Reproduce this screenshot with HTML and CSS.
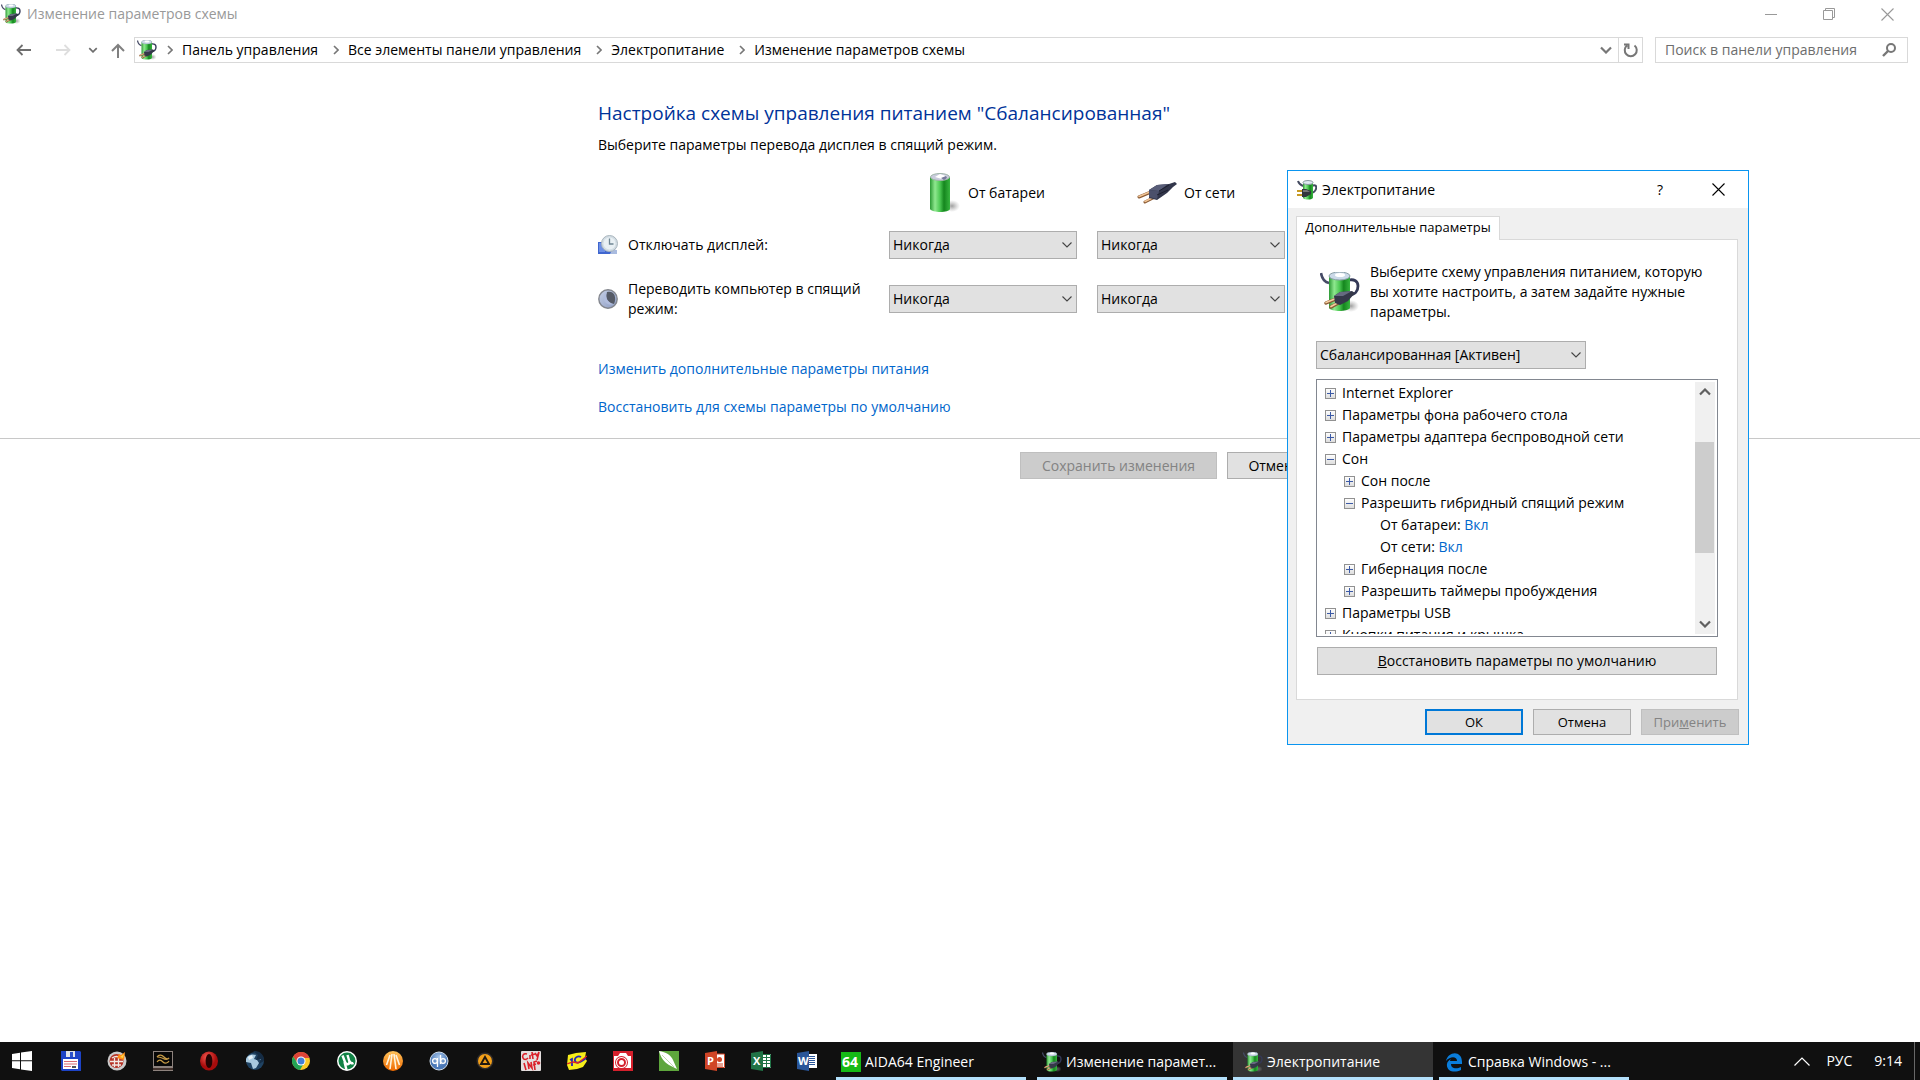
FILE: index.html
```html
<!DOCTYPE html>
<html lang="ru">
<head>
<meta charset="utf-8">
<title>Изменение параметров схемы</title>
<link rel="stylesheet" href="styles.css">
</head>
<body>
<svg class="defs" aria-hidden="true">
  <defs>
    <linearGradient id="green" x1="0" x2="1" y1="0" y2="0">
      <stop offset="0" stop-color="#2c9a35"/><stop offset=".25" stop-color="#8fe88f"/><stop offset=".5" stop-color="#4cc853"/><stop offset=".7" stop-color="#15861e"/><stop offset="1" stop-color="#37b53f"/>
    </linearGradient>
    <linearGradient id="box" x1="0" x2="0" y1="0" y2="1"><stop offset="0" stop-color="#fff"/><stop offset="1" stop-color="#dcdcdc"/></linearGradient>
    <radialGradient id="shade"><stop offset="0" stop-color="#777" stop-opacity=".7"/><stop offset="1" stop-color="#999" stop-opacity="0"/></radialGradient>
    <radialGradient id="red" cx=".4" cy=".3"><stop offset="0" stop-color="#f4574e"/><stop offset="1" stop-color="#a80c0c"/></radialGradient>
    <radialGradient id="blue" cx=".5" cy=".3"><stop offset="0" stop-color="#a9c7ea"/><stop offset="1" stop-color="#4b79b8"/></radialGradient>
    <linearGradient id="orange" x1="0" x2="0" y1="0" y2="1"><stop offset="0" stop-color="#ffc35a"/><stop offset="1" stop-color="#f06a00"/></linearGradient>
    <linearGradient id="moon" x1="0" x2="1" y1="0" y2="1"><stop offset="0" stop-color="#c6d0e6"/><stop offset="1" stop-color="#8c9bc2"/></linearGradient>
    <symbol id="plug" viewBox="0 0 40 22">
      <path d="M2 15L14 10M8 20L18 15" stroke="#8a5a33" stroke-width="3" stroke-linecap="round"/>
      <path d="M2 14.500L14 9.500M8 19.500L18 14.500" stroke="#f0c496" stroke-width="1.600" stroke-linecap="round"/>
      <path d="M12 8l8-5 12-1 6-2 2 2-4 3-6 6-10 7-8-2z" fill="#32364b"/>
      <path d="M12 8l8-5 11-1-9 7z" fill="#585d78"/><path d="M12 8l10 1-2 8-8-2z" fill="#4b506b"/>
      <path d="M22 9L32 3M20 13l11-5" stroke="#1d2030" stroke-width="1"/>
    </symbol>
    <symbol id="battery" viewBox="0 0 32 40">
      <ellipse cx="23" cy="33" rx="8" ry="6" fill="url(#shade)"/>
      <path d="M1 4v32c2 4 19 4 20 0V4z" fill="url(#green)"/>
      <ellipse cx="11" cy="4" rx="9.500" ry="3.500" fill="#c9cbdc" stroke="#9fb5a8"/>
      <path d="M6 4l5-3 6 2-4 3z" fill="#fff"/><path d="M12 5l5-2 1 2-3 2z" fill="#77799a"/>
    </symbol>
    <symbol id="power" viewBox="0 0 40 40">
      <ellipse cx="31" cy="34" rx="8" ry="6" fill="url(#shade)"/>
      <path d="M1 1c1 6 3 9 8 10" fill="none" stroke="#464b66" stroke-width="2.600"/>
      <path d="M29 8c5-1 9 1 9 6s-3 9-9 9" fill="none" stroke="#343957" stroke-width="2.800"/>
      <path d="M9 4v32c2 4 19 4 21 0V4z" fill="url(#green)"/>
      <ellipse cx="19.500" cy="4" rx="10.500" ry="4" fill="#cbd9e8" stroke="#8ba0a8"/>
      <ellipse cx="20" cy="3" rx="5" ry="2" fill="#fff"/>
      <path d="M6 31l10-4M11 35l9-5" stroke="#8a5a33" stroke-width="3.500" stroke-linecap="round"/>
      <path d="M6 30.500l10-4M11 34.500l9-5" stroke="#f3cda0" stroke-width="1.700" stroke-linecap="round"/>
      <path d="M14 24l6-4 12-1 3 2-7 8-8 4-5-2z" fill="#353849"/><path d="M14 24l6-4 12-1-9 5z" fill="#666a80"/>
    </symbol>
    <symbol id="power-small" viewBox="0 0 20 20">
      <path d="M1 1c1 3 2 4 5 5M15 6c3-2 5 0 4 3s-3 4-6 4" fill="none" stroke="#444b60" stroke-width="2"/>
      <path d="M6 2v16c2 2 8 2 10 0V2z" fill="url(#green)"/><ellipse cx="11" cy="2.500" rx="5" ry="2" fill="#dfeaf2" stroke="#8798a0"/>
      <path d="M0 11h5M0 15h5" stroke="#c79a22" stroke-width="2"/><path d="M5 9h4l5 2v3l-5 3H5z" fill="#33363d"/><path d="M6 10h4l3 2H6z" fill="#777"/>
    </symbol>
    <symbol id="chev-down" viewBox="0 0 10 6"><path d="M.5.5L5 5 9.500.5" fill="none" stroke="currentColor" stroke-width="1.100"/></symbol>
    <symbol id="crumb" viewBox="0 0 6 10"><path d="M1 1l4 4-4 4" fill="none" stroke="currentColor" stroke-width="1.600"/></symbol>
    <symbol id="chev-bold" viewBox="0 0 12 8"><path d="M1 1.500l5 5 5-5" fill="none" stroke="currentColor" stroke-width="2.200"/></symbol>
    <symbol id="arrow" viewBox="0 0 16 12"><path d="M15 6H2M6.500 1L1.500 6l5 5" fill="none" stroke="currentColor" stroke-width="1.800"/></symbol>
    <symbol id="cross" viewBox="0 0 13 13"><path d="M.5.5l12 12M12.500.5l-12 12" stroke="currentColor" stroke-width="1.100"/></symbol>
    <symbol id="plus" viewBox="0 0 11 11"><rect x=".5" y=".5" width="10" height="10" fill="url(#box)" stroke="#919191"/><path d="M2 5.500h7M5.500 2v7" stroke="#3c5aa6"/></symbol>
    <symbol id="minus" viewBox="0 0 11 11"><rect x=".5" y=".5" width="10" height="10" fill="url(#box)" stroke="#919191"/><path d="M2 5.500h7" stroke="#3c5aa6"/></symbol>
  </defs>
</svg>

<div class="desktop">
  <main class="window">
    <header class="titlebar">
      <svg class="i20"><use href="#power"/></svg>
      <span class="window-title">Изменение параметров схемы</span>
      <button class="ctl" aria-label="Свернуть"><svg width="13" height="13"><path d="M0 6.500h12" stroke="currentColor"/></svg></button>
      <button class="ctl" aria-label="Восстановить"><svg width="13" height="13" fill="none" stroke="currentColor"><path d="M.5 2.500h9v9h-9zM2.500 2.500v-2h9v9h-2"/></svg></button>
      <button class="ctl" aria-label="Закрыть"><svg width="13" height="13"><use href="#cross"/></svg></button>
    </header>

    <nav class="navbar">
      <div class="history">
        <button aria-label="Назад"><svg width="16" height="12"><use href="#arrow"/></svg></button>
        <button aria-label="Вперёд" class="dim"><svg class="flip" width="16" height="12"><use href="#arrow"/></svg></button>
        <button aria-label="Последние" class="recent"><svg width="10" height="6"><use href="#chev-bold"/></svg></button>
        <button aria-label="Вверх" class="up"><svg width="14" height="15" fill="none" stroke="currentColor" stroke-width="2"><path d="M7 15V2M1 8l6-6 6 6"/></svg></button>
      </div>
      <div class="address">
        <svg class="i20"><use href="#power"/></svg>
        <svg class="sep"><use href="#crumb"/></svg><a href="#">Панель управления</a>
        <svg class="sep"><use href="#crumb"/></svg><a href="#">Все элементы панели управления</a>
        <svg class="sep"><use href="#crumb"/></svg><a href="#">Электропитание</a>
        <svg class="sep"><use href="#crumb"/></svg><a href="#">Изменение параметров схемы</a>
        <button class="drop" aria-label="Журнал"><svg width="12" height="8"><use href="#chev-bold"/></svg></button>
        <button class="refresh" aria-label="Обновить"><svg width="15" height="15" fill="none" stroke="currentColor" stroke-width="2"><path d="M4 2.500a6 6 0 1 0 7.500 0M1 1.500h4.500V6"/></svg></button>
      </div>
      <div class="search">
        <input type="text" placeholder="Поиск в панели управления" aria-label="Поиск">
        <svg width="14" height="14" fill="none" stroke="currentColor"><circle cx="9" cy="5" r="4" stroke-width="2"/><path d="M6 8l-5 5" stroke-width="2.400"/></svg>
      </div>
    </nav>

    <section class="content">
      <h1>Настройка схемы управления питанием "Сбалансированная"</h1>
      <p class="lead">Выберите параметры перевода дисплея в спящий режим.</p>
      <div class="plan">
        <div class="source battery"><svg width="32" height="40"><use href="#battery"/></svg><span id="on-battery">От батареи</span></div>
        <div class="source mains"><svg width="40" height="22"><use href="#plug"/></svg><span id="on-mains">От сети</span></div>

        <svg class="i20 row-icon" viewBox="0 0 20 20"><path d="M0 7h14l5 12H0z" fill="#3f66cf"/><path d="M1 8h6v9H1z" fill="#6d8fe4"/><path d="M14 15h5v4h-7z" fill="#a9bbdf"/><circle cx="11.500" cy="8.500" r="8" fill="#d3dde4" stroke="#a9b5bd"/><circle cx="11.500" cy="8.500" r="6" fill="#e9f0f4"/><path d="M11.500 3.500v5.500h4" fill="none" stroke="#6f8592" stroke-width="1.300"/></svg>
        <label id="display">Отключать дисплей:</label>
        <div class="combo"><select aria-labelledby="display on-battery"><option>Никогда</option></select><svg><use href="#chev-down"/></svg></div>
        <div class="combo"><select aria-labelledby="display on-mains"><option>Никогда</option></select><svg><use href="#chev-down"/></svg></div>

        <svg class="i20 row-icon" viewBox="0 0 20 20"><circle cx="10" cy="10" r="9.200" fill="url(#moon)" stroke="#83868d" stroke-width="1.400"/><path d="M9 3c7-2 10 5 7 12-6 0-10-7-7-12z" fill="#555a66"/><path d="M9 3c-2 6 1 11 7 12-9 3-14-7-7-12z" fill="#b1bddd"/></svg>
        <label id="sleep">Переводить компьютер в спящий режим:</label>
        <div class="combo"><select aria-labelledby="sleep on-battery"><option>Никогда</option></select><svg><use href="#chev-down"/></svg></div>
        <div class="combo"><select aria-labelledby="sleep on-mains"><option>Никогда</option></select><svg><use href="#chev-down"/></svg></div>
      </div>
      <div class="links">
        <a href="#">Изменить дополнительные параметры питания</a>
        <a href="#">Восстановить для схемы параметры по умолчанию</a>
      </div>
    </section>
    <footer class="actions">
      <div class="actions-inner">
        <button class="btn save" disabled>Сохранить изменения</button>
        <button class="btn cancel">Отмена</button>
      </div>
    </footer>
  </main>

  <div class="dialog" role="dialog" aria-label="Электропитание">
    <header class="dialog-title">
      <svg class="i20"><use href="#power-small"/></svg>
      <span class="dialog-name">Электропитание</span>
      <button class="ctl" aria-label="Справка">?</button>
      <button class="ctl" aria-label="Закрыть"><svg width="13" height="13"><use href="#cross"/></svg></button>
    </header>
    <div class="dialog-body">
      <button class="tab" role="tab">Дополнительные параметры</button>
      <div class="panel">
        <div class="intro">
          <svg width="40" height="40"><use href="#power"/></svg>
          <p>Выберите схему управления питанием, которую вы хотите настроить, а затем задайте нужные параметры.</p>
        </div>
        <div class="combo scheme"><select aria-label="Схема"><option>Сбалансированная [Активен]</option></select><svg><use href="#chev-down"/></svg></div>
        <div class="tree">
          <ul class="tree-list">
            <li><svg><use href="#plus"/></svg>Internet Explorer</li>
            <li><svg><use href="#plus"/></svg>Параметры фона рабочего стола</li>
            <li><svg><use href="#plus"/></svg>Параметры адаптера беспроводной сети</li>
            <li><svg><use href="#minus"/></svg>Сон</li>
            <li class="l2"><svg><use href="#plus"/></svg>Сон после</li>
            <li class="l2"><svg><use href="#minus"/></svg>Разрешить гибридный спящий режим</li>
            <li class="l3">От батареи: <a href="#">Вкл</a></li>
            <li class="l3">От сети: <a href="#">Вкл</a></li>
            <li class="l2"><svg><use href="#plus"/></svg>Гибернация после</li>
            <li class="l2"><svg><use href="#plus"/></svg>Разрешить таймеры пробуждения</li>
            <li><svg><use href="#plus"/></svg>Параметры USB</li>
            <li><svg><use href="#plus"/></svg>Кнопки питания и крышка</li>
          </ul>
          <div class="scrollbar">
            <svg class="flip" width="12" height="8"><use href="#chev-bold"/></svg>
            <div class="track"><div class="thumb"></div></div>
            <svg width="12" height="8"><use href="#chev-bold"/></svg>
          </div>
        </div>
        <button class="btn restore"><u>В</u>осстановить параметры по умолчанию</button>
      </div>
      <div class="dialog-actions">
        <button class="btn default">ОК</button>
        <button class="btn">Отмена</button>
        <button class="btn" disabled>При<u>м</u>енить</button>
      </div>
    </div>
  </div>

  <footer class="taskbar">
    <button class="start" aria-label="Пуск"><svg class="i20" viewBox="0 0 20 20" fill="#fff"><path d="M0 3l8-1.200V9.300H0zM9 1.600L20 0v9.300H9zM0 10.300h8v7.900L0 17zM9 10.300h11V20L9 18.400z"/></svg></button>
    <div class="pinned">
      <button aria-label="Total Commander"><svg class="i20" viewBox="0 0 20 20"><path d="M0 0h19l1 1v19H1l-1-1z" fill="#1d43c6"/><path d="M5 0h9v6H5z" fill="#dfe3ea"/><path d="M9 1h3v5H9z" fill="#2b51c9"/><path d="M2 8h15v10H2z" fill="#fff"/><path d="M3 10.500h13M3 13h13M3 15.500h7" stroke="#d96a72"/><path d="M11 16h4" stroke="#555" stroke-width="2"/></svg></button>
      <button aria-label="Nero"><svg class="i20" viewBox="0 0 20 20"><circle cx="10" cy="10" r="9.500" fill="#cbcbcb"/><circle cx="9.500" cy="10" r="7" fill="#b53327"/><path d="M5 7c3-2 6-2 9 0M3 10.500h13M5 14h9M7.500 7v9M11.500 7v9" fill="none" stroke="#f1e9e4" stroke-width="1.300"/><path d="M10 7l2-4 2 1 4-3-1 8-4-1z" fill="#ff8b15"/><path d="M13 6l4-3-1 4z" fill="#ffd646"/></svg></button>
      <button aria-label="Монитор"><svg class="i20" viewBox="0 0 20 20"><path d="M0 0h20v20H0z" fill="#8d827d"/><path d="M1 1h18v14H1z" fill="#080808"/><path d="M4 6c2-3 5-2 7 0s4 2 5 1c-2 3-5 1-7 0s-3-1-5-1M4 11c2-3 4-2 6 0s5 1 6-1" fill="none" stroke="#c79b46" stroke-width="1.200"/><path d="M0 18h20" stroke="#43332e" stroke-width="2"/></svg></button>
      <button aria-label="Opera"><svg class="i20" viewBox="0 0 20 20"><ellipse cx="10" cy="10" rx="9" ry="9.500" fill="url(#red)"/><ellipse cx="10" cy="10" rx="3.400" ry="7" fill="#240303"/></svg></button>
      <button aria-label="Браузер"><svg class="i20" viewBox="0 0 20 20"><circle cx="10" cy="10" r="9" fill="#1f4262"/><path d="M1 8c2-5 7-5 10-4l-2 4 3 1 2 3-3 5-3 1-2-6-5-1zM14 5l3 2-2 2z" fill="#a8c9df"/><path d="M8 0c7-1 12 5 11 10l-5 3 2-5-5 1 2-5z" fill="#152c44"/><path d="M3 6l4-2 1 3-4 2z" fill="#e5f1f7"/></svg></button>
      <button aria-label="Chrome"><svg class="i20" viewBox="0 0 20 20"><circle cx="10" cy="10" r="9" fill="#fbc926"/><path d="M2.200 5.500A9 9 0 0 1 18.500 7H10l-3.500 5z" fill="#dd4438"/><path d="M2.200 5.500A9 9 0 0 0 9 19l4-7-6.500 0z" fill="#23a455"/><circle cx="10" cy="10" r="4.500" fill="#fff"/><circle cx="10" cy="10" r="3.500" fill="#427fd6"/></svg></button>
      <button aria-label="uTorrent"><svg class="i20" viewBox="0 0 20 20"><circle cx="10" cy="10" r="10" fill="#fff"/><circle cx="10" cy="10" r="8.500" fill="#118245"/><path d="M5.500 4.500L8 11c1 3 4 3 4.500 0L10.500 4M12.500 10c1 2 2 3 4 2M7.500 11l2 8" fill="none" stroke="#fff" stroke-width="2.400"/></svg></button>
      <button aria-label="Оранжевый клиент"><svg class="i20" viewBox="0 0 20 20"><circle cx="10" cy="10" r="10" fill="url(#orange)"/><path d="M9 3L7 18M11 3l2 15M7 4L3.500 14M13 4l3.500 10" stroke="#fff3dc" stroke-width="1.600"/></svg></button>
      <button aria-label="qBittorrent"><svg class="i20" viewBox="0 0 20 20"><circle cx="10" cy="10" r="9" fill="url(#blue)" stroke="#d2dfed"/><path d="M8.500 7v9M11.500 4v9" stroke="#fff" stroke-width="1.300"/><circle cx="6" cy="10" r="2.400" fill="none" stroke="#fff" stroke-width="1.300"/><circle cx="14" cy="10" r="2.400" fill="none" stroke="#fff" stroke-width="1.300"/></svg></button>
      <button aria-label="AIMP"><svg class="i20" viewBox="0 0 20 20"><circle cx="10" cy="10" r="8.500" fill="#302c2b"/><circle cx="10" cy="10" r="7" fill="#f3a019"/><path d="M10 6l4 7H6z" fill="none" stroke="#201810" stroke-width="1.900"/></svg></button>
      <button aria-label="City Info"><svg class="i20" viewBox="0 0 20 20"><rect width="20" height="20" rx="1" fill="#e3dede"/><path d="M6 3C2 2 1 5 2 7s3 2 5 0M9 4v4M11 1l1 7M10 4l4-1M14 2l2 3 2-4-2 8M3 12l2 7M8 18l-1-6 4 5-1-6M14 19l-1-8 3-1M12 14l3-1" fill="none" stroke="#da2029" stroke-width="1.600"/><circle cx="17.500" cy="12" r="1.800" fill="#da2029"/></svg></button>
      <button aria-label="1С"><svg class="i20" viewBox="0 0 20 20"><path d="M1 4l8-2 10-1-1 6 2 3-4 6-6 2-8 1-2-5z" fill="#f7ee1a"/><path d="M3 9l2-1v7M14 6c-3-2-7 1-6 4 1 3 5 2 11-3" fill="none" stroke="#2427b6" stroke-width="1.800"/><path d="M0 13l6-2 5 1 9-7" fill="none" stroke="#de2724" stroke-width="1.300"/></svg></button>
      <button aria-label="Camera"><svg class="i20" viewBox="0 0 20 20"><path d="M0 0h20v20H0z" fill="#d5202c"/><path d="M1 5h4l2-3h6l2 3h3v12H1z" fill="#fff"/><circle cx="8.500" cy="11.500" r="6.500" fill="#d5202c"/><circle cx="8.500" cy="11.500" r="5.500" fill="#fff"/><circle cx="8.500" cy="11.500" r="3.500" fill="none" stroke="#d5202c" stroke-width="2"/></svg></button>
      <button aria-label="CorelDRAW"><svg class="i20" viewBox="0 0 20 20"><path d="M0 0h20v20H0z" fill="#5ea63c"/><path d="M0 0c7 1 12 4 14 9l4 9-8-4C5 11 2 7 0 0z" fill="#fff"/><path d="M3 4l12 12" stroke="#bcd9ab"/></svg></button>
      <button aria-label="PowerPoint"><svg class="i20" viewBox="0 0 20 20"><path d="M11 3h9v14h-9z" fill="#fff"/><path d="M11 3h8.500v13.500H11M12 13h6M12 15h6" fill="none" stroke="#d04526"/><circle cx="14.500" cy="8.500" r="2.500" fill="#d04526"/><path d="M0 2l12-2v20L0 18z" fill="#d04526"/><text x="2" y="14" class="glyph">P</text></svg></button>
      <button aria-label="Excel"><svg class="i20" viewBox="0 0 20 20"><path d="M11 3h9v14h-9z" fill="#fff"/><path d="M11 3.500h8.500v13H11M12 6.500h7M12 9.500h7M12 12.500h7M15.500 4v12" fill="none" stroke="#207346"/><path d="M0 2l12-2v20L0 18z" fill="#207346"/><text x="2" y="14" class="glyph">X</text></svg></button>
      <button aria-label="Word"><svg class="i20" viewBox="0 0 20 20"><path d="M11 3h9v14h-9z" fill="#fff"/><path d="M12 5.500h6M12 7.500h6M12 9.500h6M12 11.500h6M12 13.500h6" stroke="#2a5699"/><path d="M0 2l12-2v20L0 18z" fill="#2a5699"/><text x="1" y="14" class="glyph">W</text></svg></button>
    </div>
    <div class="tasks">
      <button class="task"><svg class="i20" viewBox="0 0 20 20"><path d="M0 0h20v20H0z" fill="#16ba16"/><text x="1" y="15" class="glyph wide">64</text></svg><span>AIDA64 Engineer</span></button>
      <button class="task"><svg class="i20"><use href="#power"/></svg><span>Изменение парамет...</span></button>
      <button class="task active"><svg class="i20"><use href="#power"/></svg><span>Электропитание</span></button>
      <button class="task"><svg class="i20" viewBox="0 0 20 20"><path d="M2 9C4-1 18-2 18 10v2H7c0 5 6 5 10 3v3C9 22 2 18 3 12c0-2 2-4 4-5-1 1-1 2-1 2h7c0-5-7-5-11 0z" fill="#0a7ddb"/></svg><span>Справка Windows - ...</span></button>
    </div>
    <div class="tray">
      <button aria-label="Скрытые значки"><svg width="16" height="9" fill="none" stroke="#fff" stroke-width="1.200"><path d="M.5 8.500l7.500-7.500 7.500 7.500"/></svg></button>
      <span>РУС</span>
      <time>9:14</time>
      <button class="peek" aria-label="Свернуть все окна"></button>
    </div>
  </footer>
</div>
</body>
</html>
```
FILE: styles.css
```css
* { box-sizing: border-box; }
body {
  margin: 0;
  font: 14px/20px "Open Sans", "Noto Sans", sans-serif;
  color: #000;
  background: #fff;
}
.defs { position: absolute; width: 0; height: 0; }
svg { display: block; flex: none; }
.i20 { width: 20px; height: 20px; }
button, input, select { font: inherit; color: inherit; }
button { border: 0; padding: 0; background: none; }
h1, p, ul { margin: 0; padding: 0; }
a { color: #0066cc; text-decoration: none; }
.flip { transform: rotate(180deg); }

.desktop { position: relative; display: flex; flex-direction: column; min-height: 100vh; overflow: hidden; }
.window { flex: 1; }

/* Main window frame */
.titlebar { display: flex; align-items: center; height: 28px; padding: 0 4px 0 1px; color: #999; }
.titlebar .i20 { margin-right: 6px; }
.window-title { flex: 1; }
.ctl { display: grid; place-items: center; width: 58px; height: 28px; }

.navbar { display: flex; align-items: center; padding: 9px 12px 0 0; }
.history { display: flex; align-items: center; width: 134px; padding-left: 16px; color: #6e6e6e; }
.history button { margin-right: 23px; }
.history .dim { color: #dedede; margin-right: 17px; }
.history .recent { margin-right: 13px; }
.history .up { margin-right: 0; color: #808080; }
.address { flex: 1; display: flex; align-items: center; height: 26px; border: 1px solid #d9d9d9; padding-left: 2px; }
.address a { margin-right: 5px; color: #000; }
.sep { width: 6px; height: 10px; margin: 0 9px 0 10px; color: #777; }
.drop { margin-left: auto; width: 24px; color: #777; display: grid; place-items: center; }
.refresh { width: 24px; height: 24px; border-left: 1px solid #d9d9d9; color: #777; display: grid; place-items: center; }
.search { display: flex; align-items: center; width: 253px; height: 26px; margin-left: 12px; padding: 0 11px 0 9px; border: 1px solid #d9d9d9; color: #777; }
.search input { flex: 1; min-width: 0; border: 0; padding: 0; background: none; outline: 0; }
.search input::placeholder { color: #6d6d6d; opacity: 1; }

/* Plan settings */
.content, .actions-inner { max-width: 724px; margin: 0 auto; }
.content { padding-top: 36px; }
h1 { font-size: 19px; line-height: 28px; font-weight: 400; color: #003399; }
.lead { margin-top: 8px; }
.plan { display: grid; grid-template-columns: 20px 251px 188px 188px; column-gap: 10px; align-items: center; margin-top: 16px; }
.plan .combo + .combo { margin-left: 10px; margin-right: -10px; }
.source { display: flex; align-items: center; gap: 7px; height: 44px; margin-bottom: 6px; }
.battery { grid-column: 3; padding-left: 40px; }
.mains { padding-left: 50px; }
.plan label { padding-right: 10px; }
.row-icon, .plan label, .plan .combo { margin-top: 10px; margin-bottom: 10px; }
.combo { display: grid; align-items: center; height: 28px; }
.combo select { grid-area: 1 / 1; appearance: none; width: 100%; height: 28px; padding: 0 3px; border: 1px solid #adadad; border-radius: 0; background: #e1e1e1; }
.combo svg { grid-area: 1 / 1; justify-self: end; width: 10px; height: 6px; margin-right: 5px; color: #444; pointer-events: none; }
.links { display: flex; flex-direction: column; align-items: flex-start; gap: 18px; margin-top: 30px; padding-bottom: 21px; }

.actions { border-top: 1px solid #c8c8c8; padding-top: 13px; }
.actions-inner { display: flex; justify-content: flex-end; gap: 10px; }
.btn { height: 27px; border: 1px solid #adadad; background: #e1e1e1; }
.btn:disabled { background: #cccccc; border-color: #bfbfbf; color: #838383; }
.save { width: 197px; }
.cancel { width: 95px; }

/* Advanced options dialog floating over the desktop */
.dialog { position: absolute; left: 1287px; top: 170px; width: 462px; border: 1px solid #0a95f0; background: #f0f0f0; }
.dialog-title { display: flex; align-items: center; height: 37px; padding: 0 1px 0 9px; background: #fff; }
.dialog-name { flex: 1; padding-left: 5px; }
.dialog-body { padding: 8px 9px 9px 8px; }
.tab { display: block; position: relative; width: 204px; height: 24px; margin-bottom: -1px; padding-bottom: 3px; border: 1px solid #d9d9d9; border-bottom: 0; background: #fff; font-size: 13px; line-height: 18px; white-space: nowrap; }
.panel { margin-right: 1px; padding: 22px 19px 24px; border: 1px solid #d9d9d9; background: #fff; }
.intro { display: flex; align-items: center; gap: 10px; padding-left: 4px; }
.scheme { width: 270px; margin-top: 19px; }
.tree { display: flex; height: 258px; margin-top: 10px; padding: 2px; border: 1px solid #828790; overflow: hidden; }
.tree-list { flex: 1; height: 252px; overflow: hidden; list-style: none; }
.tree li { display: flex; align-items: center; height: 22px; padding-left: 6px; white-space: pre; }
.tree li.l2 { padding-left: 25px; }
.tree li.l3 { padding-left: 61px; }
.tree li svg { width: 11px; height: 11px; margin-right: 6px; }
.scrollbar { display: flex; flex-direction: column; align-items: center; width: 20px; padding: 6px 0; background: #f0f0f0; color: #606060; }
.track { flex: 1; width: 19px; align-self: flex-start; padding-top: 46px; }
.thumb { height: 111px; background: #cdcdcd; }
.restore { display: block; width: calc(100% - 2px); height: 28px; margin: 10px 1px 0; }
.dialog-actions { display: flex; justify-content: flex-end; gap: 10px; margin-top: 9px; font-size: 13px; }
.dialog-actions .btn { width: 98px; height: 26px; }
.dialog-actions .default { border: 2px solid #0078d7; }

/* Taskbar */
.taskbar { display: flex; height: 38px; background: #101010; color: #fff; }
.taskbar button { display: grid; place-items: center; height: 38px; }
.start { width: 44px; margin-right: 4px; }
.pinned { display: flex; }
.pinned button { width: 46px; }
.tasks { display: flex; gap: 1px; margin-left: 1px; }
.taskbar .task { display: flex; align-items: center; gap: 4px; width: 200px; padding: 2px 0 0 10px; background: linear-gradient(#b3e0fb, #b3e0fb) center bottom / 190px 3px no-repeat; }
.taskbar .task.active { background: linear-gradient(#b3e0fb, #b3e0fb) center bottom / 100% 3px no-repeat #343434; }
.task span { white-space: nowrap; }
.tray { display: flex; align-items: center; margin-left: auto; }
.tray span { margin: 0 22px 0 16px; }
.tray time { margin-right: 12px; }
.taskbar .peek { width: 6px; border-left: 1px solid #686868; }
.glyph { font: bold 11px "Open Sans", sans-serif; fill: #fff; }
.wide { font-size: 14px; }
```
